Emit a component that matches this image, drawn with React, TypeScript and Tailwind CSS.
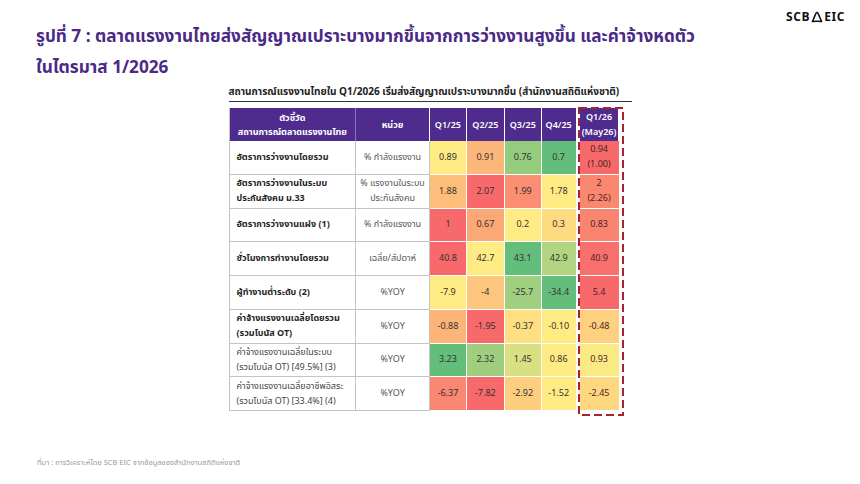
import React from "react";

type Cell = { v: string; bg: string; v2?: string };
type Row = {
  label: string[];
  bold: boolean;
  unit: string[];
  cells: Cell[];
};

const rows: Row[] = [
  {
    label: ["อัตราการว่างงานโดยรวม"],
    bold: true,
    unit: ["% กำลังแรงงาน"],
    cells: [
      { v: "0.89", bg: "bg-[#ffeb84]" },
      { v: "0.91", bg: "bg-[#fcb77a]" },
      { v: "0.76", bg: "bg-[#94cc7e]" },
      { v: "0.7", bg: "bg-[#63be7b]" },
      { v: "0.94", v2: "(1.00)", bg: "bg-[#f8696b]" },
    ],
  },
  {
    label: ["อัตราการว่างงานในระบบ", "ประกันสังคม ม.33"],
    bold: true,
    unit: ["% แรงงานในระบบ", "ประกันสังคม"],
    cells: [
      { v: "1.88", bg: "bg-[#fdbe7b]" },
      { v: "2.07", bg: "bg-[#f8696b]" },
      { v: "1.99", bg: "bg-[#fa8d72]" },
      { v: "1.78", bg: "bg-[#ffeb84]" },
      { v: "2", v2: "(2.26)", bg: "bg-[#fa8871]" },
    ],
  },
  {
    label: ["อัตราการว่างงานแฝง (1)"],
    bold: true,
    unit: ["% กำลังแรงงาน"],
    cells: [
      { v: "1", bg: "bg-[#f8696b]" },
      { v: "0.67", bg: "bg-[#fba776]" },
      { v: "0.2", bg: "bg-[#ffeb84]" },
      { v: "0.3", bg: "bg-[#fedb81]" },
      { v: "0.83", bg: "bg-[#f98570]" },
    ],
  },
  {
    label: ["ชั่วโมงการทำงานโดยรวม"],
    bold: true,
    unit: ["เฉลี่ย/สัปดาห์"],
    cells: [
      { v: "40.8", bg: "bg-[#f8696b]" },
      { v: "42.7", bg: "bg-[#ffeb84]" },
      { v: "43.1", bg: "bg-[#63be7b]" },
      { v: "42.9", bg: "bg-[#b1d580]" },
      { v: "40.9", bg: "bg-[#f8706d]" },
    ],
  },
  {
    label: ["ผู้ทำงานต่ำระดับ (2)"],
    bold: true,
    unit: ["%YOY"],
    cells: [
      { v: "-7.9", bg: "bg-[#ffeb84]" },
      { v: "-4", bg: "bg-[#fdc57d]" },
      { v: "-25.7", bg: "bg-[#a0d07f]" },
      { v: "-34.4", bg: "bg-[#63be7b]" },
      { v: "5.4", bg: "bg-[#f8696b]" },
    ],
  },
  {
    label: ["ค่าจ้างแรงงานเฉลี่ยโดยรวม", "(รวมโบนัส OT)"],
    bold: true,
    unit: ["%YOY"],
    cells: [
      { v: "-0.88", bg: "bg-[#fcb479]" },
      { v: "-1.95", bg: "bg-[#f8696b]" },
      { v: "-0.37", bg: "bg-[#fedf82]" },
      { v: "-0.10", bg: "bg-[#ffeb84]" },
      { v: "-0.48", bg: "bg-[#fed07f]" },
    ],
  },
  {
    label: ["ค่าจ้างแรงงานเฉลี่ยในระบบ", "(รวมโบนัส OT) [49.5%] (3)"],
    bold: false,
    unit: ["%YOY"],
    cells: [
      { v: "3.23", bg: "bg-[#63be7b]" },
      { v: "2.32", bg: "bg-[#9fcf7e]" },
      { v: "1.45", bg: "bg-[#d8e082]" },
      { v: "0.86", bg: "bg-[#ffeb84]" },
      { v: "0.93", bg: "bg-[#faea84]" },
    ],
  },
  {
    label: ["ค่าจ้างแรงงานเฉลี่ยอาชีพอิสระ", "(รวมโบนัส OT) [33.4%] (4)"],
    bold: false,
    unit: ["%YOY"],
    cells: [
      { v: "-6.37", bg: "bg-[#fa8771]" },
      { v: "-7.82", bg: "bg-[#f8696b]" },
      { v: "-2.92", bg: "bg-[#fdce7e]" },
      { v: "-1.52", bg: "bg-[#ffeb84]" },
      { v: "-2.45", bg: "bg-[#fed880]" },
    ],
  },
];

const qWidths = ["w-[37px]", "w-[38px]", "w-[37px]", "w-[35px]"];

const font = {
  fontFamily:
    '"Noto Sans Thai", "Leelawadee UI", Tahoma, "Noto Sans", "DejaVu Sans", sans-serif',
};

function Logo() {
  return (
    <div className="flex items-center text-[12px] font-bold tracking-[0.6px] text-[#111]">
      <span>SCB</span>
      <svg width="12" height="12" viewBox="0 0 12 12" className="mx-[1px]">
        <path
          d="M1.4 10.6 L4.8 2.6 Q6 0.4 7.2 2.6 L10.6 10.6 Q6 9.8 1.4 10.6 Z"
          fill="none"
          stroke="#111"
          strokeWidth="1.5"
          strokeLinejoin="round"
        />
      </svg>
      <span>EIC</span>
    </div>
  );
}

export default function App() {
  return (
    <div
      className="relative flex h-[484px] w-[860px] flex-col bg-white"
      style={font}
    >
      <div className="absolute right-[15px] top-[8px]">
        <Logo />
      </div>

      <div className="pl-[36px] pt-[22px] text-[17.2px] font-bold leading-[31px] text-[#4b2a86]">
        <div>
          รูปที่ 7 : ตลาดแรงงานไทยส่งสัญญาณเปราะบางมากขึ้นจากการว่างงานสูงขึ้น และค่าจ้างหดตัว
        </div>
        <div>ในไตรมาส 1/2026</div>
      </div>

      <div className="mx-auto mt-[1px] w-[403px]">
        <div className="border-b-[1.5px] border-[#333] pb-[1.5px] text-[10px] font-bold leading-[14px] text-[#222]">
          สถานการณ์แรงงานไทยใน Q1/2026 เริ่มส่งสัญญาณเปราะบางมากขึ้น (สำนักงานสถิติแห่งชาติ)
        </div>

        <div className="relative mt-[6.5px] w-[390px] border-l border-[#c4c4c4]">
          {/* header */}
          <div className="flex h-[33px] text-[9px] leading-[14px] text-white">
            <div className="flex w-[127px] flex-col items-center justify-center border-r border-[#8a72b8] bg-[#4f2b8d] font-bold">
              <span>ตัวชี้วัด</span>
              <span>สถานการณ์ตลาดแรงงานไทย</span>
            </div>
            <div className="flex w-[74px] items-center justify-center border-r border-white bg-[#4f2b8d] font-bold">
              หน่วย
            </div>
            {["Q1/25", "Q2/25", "Q3/25", "Q4/25"].map((q, i) => (
              <div
                key={q}
                className={`flex ${qWidths[i]} items-center justify-center border-r border-white bg-[#4f2b8d] font-semibold`}
              >
                {q}
              </div>
            ))}
            <div className="w-[3px] bg-white" />
            <div className="flex w-[39px] flex-col items-center justify-center bg-[#4f2b8d] font-semibold leading-[15px]">
              <span>Q1/26</span>
              <span>(May26)</span>
            </div>
          </div>

          {rows.map((r, ri) => (
            <div
              key={ri}
              className="flex h-[33.75px] text-[9px] leading-[15px]"
            >
              <div
                className={`flex w-[127px] flex-col justify-center border-b border-r border-[#c4c4c4] pl-[7px] ${
                  r.bold ? "font-bold text-[#1f1f1f]" : "text-[#444]"
                }`}
              >
                {r.label.map((l) => (
                  <span key={l}>{l}</span>
                ))}
              </div>
              <div className="flex w-[74px] flex-col items-center justify-center border-b border-r border-[#c4c4c4] text-[#555]">
                {r.unit.map((u) => (
                  <span key={u}>{u}</span>
                ))}
              </div>
              {r.cells.slice(0, 4).map((c, ci) => (
                <div
                  key={ci}
                  className={`flex ${qWidths[ci]} items-center justify-center border-b border-r border-white ${c.bg} text-[#333]`}
                >
                  {c.v}
                </div>
              ))}
              <div className="w-[3px] bg-white" />
              <div
                className={`flex w-[39px] flex-col items-center justify-center border-b border-white ${r.cells[4].bg} text-[#4a2424]`}
              >
                <span>{r.cells[4].v}</span>
                {r.cells[4].v2 && <span>{r.cells[4].v2}</span>}
              </div>
            </div>
          ))}

          <svg
            className="pointer-events-none absolute left-[348px] top-[-1px]"
            width="46"
            height="309"
            viewBox="0 0 46 309"
          >
            <rect
              x="1"
              y="1"
              width="44"
              height="307"
              fill="none"
              stroke="#a9222d"
              strokeWidth="2"
              strokeDasharray="8 4"
            />
          </svg>
        </div>
      </div>

      <div className="mt-auto pb-[16px] pl-[37px] text-[7.5px] text-[#9a9a9a]">
        ที่มา : การวิเคราะห์โดย SCB EIC จากข้อมูลของสำนักงานสถิติแห่งชาติ
      </div>
    </div>
  );
}
